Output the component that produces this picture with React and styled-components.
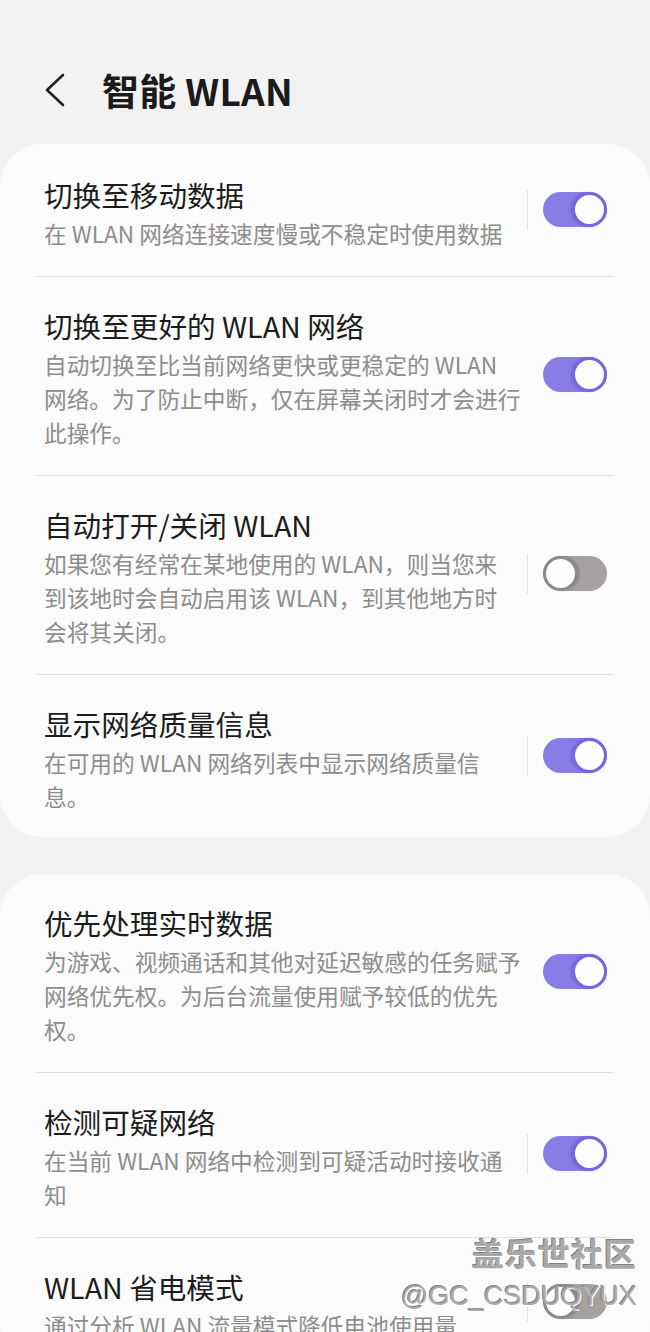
import React from 'react'
import styled, { createGlobalStyle } from 'styled-components'

const GlobalStyle = createGlobalStyle`
  html, body {
    margin: 0;
    padding: 0;
    background: #f2f2f2;
    font-family: "Noto Sans CJK SC", "Noto Sans", sans-serif;
    overflow: hidden;
  }
`

const Page = styled.div`
  position: relative;
  width: 650px;
  height: 1332px;
  overflow: hidden;
  background: #f2f2f2;
`

const Header = styled.div`
  display: flex;
  align-items: center;
  height: 44px;
  padding: 68px 0 32px 44px;
`

const BackButton = styled.div`
  width: 26px;
  height: 44px;
  display: flex;
  align-items: center;
  margin-right: 32px;
`

const Title = styled.h1`
  margin: 0;
  font-size: 37px;
  line-height: 44px;
  font-weight: 700;
  color: #1b1b1b;
  letter-spacing: 0.3px;
`

const Card = styled.div`
  background: #fbfbfb;
  border-radius: 42px;
  padding-top: ${p => p.$padTop}px;
  margin-bottom: 37px;
`

const Row = styled.div`
  display: flex;
  align-items: center;
  padding: 31px 43px ${p => (p.$last ? 23 : 25)}px 44px;
`

const TextCol = styled.div`
  flex: 1;
  min-width: 0;
`

const RowTitle = styled.div`
  font-size: 28.6px;
  line-height: 36px;
  color: #1c1c1c;
  margin-bottom: 4px;
  white-space: nowrap;
`

const RowSub = styled.div`
  font-size: 22.7px;
  line-height: 34px;
  color: #8d8d8d;
  white-space: nowrap;
`

const Separator = styled.div`
  width: 1px;
  height: 40px;
  margin: 0 15px 9px 10px;
  background: ${p => (p.$show ? '#e3e3e3' : 'transparent')};
`

const Track = styled.div`
  width: 64px;
  height: 35px;
  border-radius: 18px;
  margin-bottom: 9px;
  background: ${p => (p.$on ? '#8a7ce7' : '#a6a2a2')};
  display: flex;
  justify-content: ${p => (p.$on ? 'flex-end' : 'flex-start')};
`

const Knob = styled.div`
  width: 35px;
  height: 35px;
  box-sizing: border-box;
  border-radius: 50%;
  background: #fdfdfd;
  border: 3px solid ${p => (p.$on ? '#7767de' : '#8e8a8a')};
  box-shadow: ${p => (p.$on ? '-2px 0 2px rgba(80,60,180,0.25)' : '2px 0 2px rgba(0,0,0,0.15)')};
`

const Divider = styled.div`
  height: 1px;
  margin: 0 37px 0 36px;
  background: #e0e0e0;
`

const Watermark = styled.div`
  position: absolute;
  right: 13px;
  top: ${p => p.$top}px;
  font-size: ${p => p.$size}px;
  line-height: 1;
  color: #a9a9a9;
  text-shadow: 1px 1px 0 #ffffff, -1px -1px 0 #808080;
  font-family: ${p => (p.$latin ? '"Liberation Sans", sans-serif' : '"Noto Sans CJK SC", sans-serif')};
  font-weight: ${p => (p.$latin ? 400 : 700)};
  letter-spacing: ${p => (p.$latin ? '0px' : '1px')};
`

const Toggle = ({ on }) => (
  <Track $on={on}>
    <Knob $on={on} />
  </Track>
)

const SettingRow = ({ title, lines, on, sep, last }) => (
  <Row $last={last}>
    <TextCol>
      <RowTitle>{title}</RowTitle>
      <RowSub>
        {lines.map((l, i) => (
          <div key={i}>{l}</div>
        ))}
      </RowSub>
    </TextCol>
    <Separator $show={sep} />
    <Toggle on={on} />
  </Row>
)

const group1 = [
  { title: '切换至移动数据', lines: ['在 WLAN 网络连接速度慢或不稳定时使用数据'], on: true, sep: true },
  {
    title: '切换至更好的 WLAN 网络',
    lines: ['自动切换至比当前网络更快或更稳定的 WLAN', '网络。为了防止中断，仅在屏幕关闭时才会进行', '此操作。'],
    on: true,
    sep: false,
  },
  {
    title: '自动打开/关闭 WLAN',
    lines: ['如果您有经常在某地使用的 WLAN，则当您来', '到该地时会自动启用该 WLAN，到其他地方时', '会将其关闭。'],
    on: false,
    sep: true,
  },
  {
    title: '显示网络质量信息',
    lines: ['在可用的 WLAN 网络列表中显示网络质量信', '息。'],
    on: true,
    sep: true,
  },
]

const group2 = [
  {
    title: '优先处理实时数据',
    lines: ['为游戏、视频通话和其他对延迟敏感的任务赋予', '网络优先权。为后台流量使用赋予较低的优先', '权。'],
    on: true,
    sep: false,
  },
  {
    title: '检测可疑网络',
    lines: ['在当前 WLAN 网络中检测到可疑活动时接收通', '知'],
    on: true,
    sep: true,
  },
  {
    title: 'WLAN 省电模式',
    lines: ['通过分析 WLAN 流量模式降低电池使用量'],
    on: false,
    sep: true,
  },
]

const Group = ({ items, padTop }) => (
  <Card $padTop={padTop}>
    {items.map((it, i) => (
      <React.Fragment key={it.title}>
        {i > 0 && <Divider />}
        <SettingRow {...it} last={i === items.length - 1} />
      </React.Fragment>
    ))}
  </Card>
)

export default function App() {
  return (
    <Page>
      <GlobalStyle />
      <Header>
        <BackButton>
          <svg width="22" height="34" viewBox="0 0 22 34">
            <polyline points="19,2 3,17 19,32" fill="none" stroke="#222" strokeWidth="2.6" strokeLinecap="round" strokeLinejoin="round" />
          </svg>
        </BackButton>
        <Title>智能 WLAN</Title>
      </Header>
      <Group items={group1} padTop={2} />
      <Group items={group2} padTop={0} />
      <Watermark $top={1236} $size={32}>盖乐世社区</Watermark>
      <Watermark $top={1283} $size={27} $latin>@GC_CSDUQYUX</Watermark>
    </Page>
  )
}
